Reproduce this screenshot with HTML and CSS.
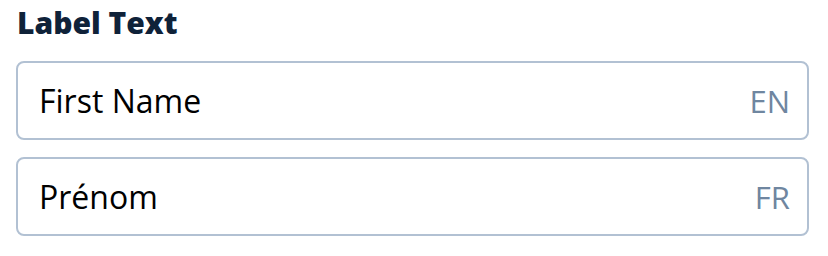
FILE: index.html
```html
<!DOCTYPE html>
<html lang="en">
<head>
    <meta charset="UTF-8">
    <meta name="viewport" content="width=device-width, initial-scale=1.0">
    <title>Label Text</title>
    <link rel="stylesheet" href="styles.css">
</head>
<body>
<div class="form-group">
    <label class="label" for="nameEn">Label Text</label>
    <div class="field">
        <input id="nameEn" class="field-input" type="text" value="First Name">
        <span class="lang">EN</span>
    </div>
    <div class="field">
        <input id="nameFr" class="field-input" type="text" value="Prénom">
        <span class="lang">FR</span>
    </div>
</div>
</body>
</html>
```

FILE: styles.css
```css
html,
body {
    margin: 0;
    padding: 0;
    background: #fff;
}

.form-group {
    display: flex;
    flex-direction: column;
    gap: 17px;
    padding: 3px 19px 0 16px;
    font-family: "Open Sans", "Noto Sans", sans-serif;
}

.label {
    display: block;
    font-size: 30px;
    font-weight: 800;
    line-height: 40px;
    color: #0f2239;
    padding-left: 1px;
    margin-bottom: 1px;
}

.field {
    display: flex;
    align-items: center;
    height: 79px;
    box-sizing: border-box;
    border: 2px solid #b2c1d3;
    border-radius: 8px;
    padding: 0 17px 0 21px;
}

.field-input {
    flex: 1;
    min-width: 0;
    border: none;
    outline: none;
    padding: 0;
    margin: 0;
    background: transparent;
    font-family: inherit;
    font-size: 32px;
    color: #000;
}

.lang {
    font-size: 31px;
    color: #6f86a0;
}
```
